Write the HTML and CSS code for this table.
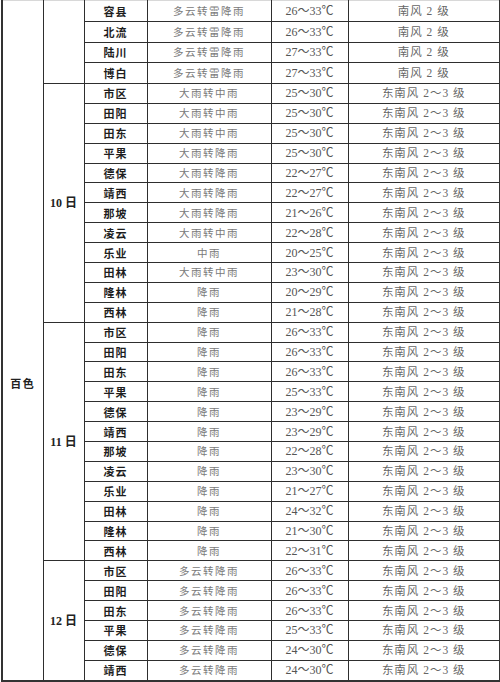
FILE: index.html
```html
<!DOCTYPE html>
<html lang="zh">
<head>
<meta charset="utf-8">
<title>百色天气预报</title>
<link rel="stylesheet" href="styles.css">
</head>
<body>
<table class="wx">
  <colgroup>
    <col class="c-city"><col class="c-day"><col class="c-name"><col class="c-wx"><col class="c-temp"><col class="c-wind">
  </colgroup>
  <tbody>
    <tr class="r-top">
      <td class="city" rowspan="34"><span>百色</span></td>
      <td class="day" rowspan="4"></td>
      <td class="name">容县</td><td class="wx-t">多云转雷降雨</td><td class="temp">26～33℃</td><td class="wind">南风 2 级</td>
    </tr>
    <tr class="r-top"><td class="name">北流</td><td class="wx-t">多云转雷降雨</td><td class="temp">26～33℃</td><td class="wind">南风 2 级</td></tr>
    <tr class="r-top"><td class="name">陆川</td><td class="wx-t">多云转雷降雨</td><td class="temp">27～33℃</td><td class="wind">南风 2 级</td></tr>
    <tr class="r-top"><td class="name">博白</td><td class="wx-t">多云转雷降雨</td><td class="temp">27～33℃</td><td class="wind">南风 2 级</td></tr>

    <tr><td class="day" rowspan="12">10 日</td>
      <td class="name">市区</td><td class="wx-t">大雨转中雨</td><td class="temp">25～30℃</td><td class="wind">东南风 2～3 级</td></tr>
    <tr><td class="name">田阳</td><td class="wx-t">大雨转中雨</td><td class="temp">25～30℃</td><td class="wind">东南风 2～3 级</td></tr>
    <tr><td class="name">田东</td><td class="wx-t">大雨转中雨</td><td class="temp">25～30℃</td><td class="wind">东南风 2～3 级</td></tr>
    <tr><td class="name">平果</td><td class="wx-t">大雨转降雨</td><td class="temp">25～30℃</td><td class="wind">东南风 2～3 级</td></tr>
    <tr><td class="name">德保</td><td class="wx-t">大雨转降雨</td><td class="temp">22～27℃</td><td class="wind">东南风 2～3 级</td></tr>
    <tr><td class="name">靖西</td><td class="wx-t">大雨转降雨</td><td class="temp">22～27℃</td><td class="wind">东南风 2～3 级</td></tr>
    <tr><td class="name">那坡</td><td class="wx-t">大雨转降雨</td><td class="temp">21～26℃</td><td class="wind">东南风 2～3 级</td></tr>
    <tr><td class="name">凌云</td><td class="wx-t">大雨转中雨</td><td class="temp">22～28℃</td><td class="wind">东南风 2～3 级</td></tr>
    <tr><td class="name">乐业</td><td class="wx-t">中雨</td><td class="temp">20～25℃</td><td class="wind">东南风 2～3 级</td></tr>
    <tr><td class="name">田林</td><td class="wx-t">大雨转中雨</td><td class="temp">23～30℃</td><td class="wind">东南风 2～3 级</td></tr>
    <tr><td class="name">隆林</td><td class="wx-t">降雨</td><td class="temp">20～29℃</td><td class="wind">东南风 2～3 级</td></tr>
    <tr><td class="name">西林</td><td class="wx-t">降雨</td><td class="temp">21～28℃</td><td class="wind">东南风 2～3 级</td></tr>

    <tr><td class="day" rowspan="12">11 日</td>
      <td class="name">市区</td><td class="wx-t">降雨</td><td class="temp">26～33℃</td><td class="wind">东南风 2～3 级</td></tr>
    <tr><td class="name">田阳</td><td class="wx-t">降雨</td><td class="temp">26～33℃</td><td class="wind">东南风 2～3 级</td></tr>
    <tr><td class="name">田东</td><td class="wx-t">降雨</td><td class="temp">26～33℃</td><td class="wind">东南风 2～3 级</td></tr>
    <tr><td class="name">平果</td><td class="wx-t">降雨</td><td class="temp">25～33℃</td><td class="wind">东南风 2～3 级</td></tr>
    <tr><td class="name">德保</td><td class="wx-t">降雨</td><td class="temp">23～29℃</td><td class="wind">东南风 2～3 级</td></tr>
    <tr><td class="name">靖西</td><td class="wx-t">降雨</td><td class="temp">23～29℃</td><td class="wind">东南风 2～3 级</td></tr>
    <tr><td class="name">那坡</td><td class="wx-t">降雨</td><td class="temp">22～28℃</td><td class="wind">东南风 2～3 级</td></tr>
    <tr><td class="name">凌云</td><td class="wx-t">降雨</td><td class="temp">23～30℃</td><td class="wind">东南风 2～3 级</td></tr>
    <tr><td class="name">乐业</td><td class="wx-t">降雨</td><td class="temp">21～27℃</td><td class="wind">东南风 2～3 级</td></tr>
    <tr><td class="name">田林</td><td class="wx-t">降雨</td><td class="temp">24～32℃</td><td class="wind">东南风 2～3 级</td></tr>
    <tr><td class="name">隆林</td><td class="wx-t">降雨</td><td class="temp">21～30℃</td><td class="wind">东南风 2～3 级</td></tr>
    <tr><td class="name">西林</td><td class="wx-t">降雨</td><td class="temp">22～31℃</td><td class="wind">东南风 2～3 级</td></tr>

    <tr><td class="day" rowspan="6">12 日</td>
      <td class="name">市区</td><td class="wx-t">多云转降雨</td><td class="temp">26～33℃</td><td class="wind">东南风 2～3 级</td></tr>
    <tr><td class="name">田阳</td><td class="wx-t">多云转降雨</td><td class="temp">26～33℃</td><td class="wind">东南风 2～3 级</td></tr>
    <tr><td class="name">田东</td><td class="wx-t">多云转降雨</td><td class="temp">26～33℃</td><td class="wind">东南风 2～3 级</td></tr>
    <tr><td class="name">平果</td><td class="wx-t">多云转降雨</td><td class="temp">25～33℃</td><td class="wind">东南风 2～3 级</td></tr>
    <tr><td class="name">德保</td><td class="wx-t">多云转降雨</td><td class="temp">24～30℃</td><td class="wind">东南风 2～3 级</td></tr>
    <tr><td class="name">靖西</td><td class="wx-t">多云转降雨</td><td class="temp">24～30℃</td><td class="wind">东南风 2～3 级</td></tr>
  </tbody>
</table>
</body>
</html>
```

FILE: styles.css
```css
html, body {
  margin: 0;
  padding: 0;
  background: #ffffff;
}

body {
  font-family: "Liberation Serif", "Noto Sans CJK SC", serif;
  font-size: 12px;
  color: #222;
}

.wx {
  margin-left: 1px;
  width: 498px;
  table-layout: fixed;
  border-collapse: collapse;
  border-top: 1px solid #d8d8d8;
  border-bottom: 2px solid #333;
}

.c-city { width: 41px; }
.c-day  { width: 41px; }
.c-name { width: 63px; }
.c-wx   { width: 124px; }
.c-temp { width: 77px; }
.c-wind { width: 152px; }

.wx td {
  border: 1px solid #2e2e2e;
  padding: 0;
  text-align: center;
  vertical-align: middle;
  height: 18.9px;
  line-height: 18px;
  white-space: nowrap;
  overflow: hidden;
}

.wx tr.r-top td {
  height: 19.75px;
}

.wx tr:first-child td {
  border-top-color: #d8d8d8;
}

.wx td.city {
  border-left: 2px solid #333;
  vertical-align: top;
  padding-top: 373px;
  font-family: "Noto Sans CJK SC", sans-serif;
  font-weight: 700;
  font-size: 11px;
  letter-spacing: 1.5px;
  color: #222;
}

.wx td.day {
  font-family: "Liberation Serif", "Noto Sans CJK SC", serif;
  font-weight: 700;
  font-size: 12px;
  color: #222;
}

.wx td:last-child {
  border-right: 2px solid #333;
}

.name {
  font-family: "Noto Sans CJK SC", sans-serif;
  font-weight: 700;
  font-size: 11px;
  letter-spacing: 1px;
  color: #1e1e1e;
}

.wx-t {
  font-family: "Noto Sans CJK SC", sans-serif;
  font-size: 10.5px;
  letter-spacing: 1.5px;
  color: #7a7a7a;
}

.temp {
  font-family: "Liberation Serif", "Noto Sans CJK SC", serif;
  font-size: 12px;
  color: #555;
}

.wind {
  font-family: "Liberation Serif", "Noto Sans CJK SC", serif;
  font-size: 11.5px;
  letter-spacing: 1px;
  color: #666;
}
```
